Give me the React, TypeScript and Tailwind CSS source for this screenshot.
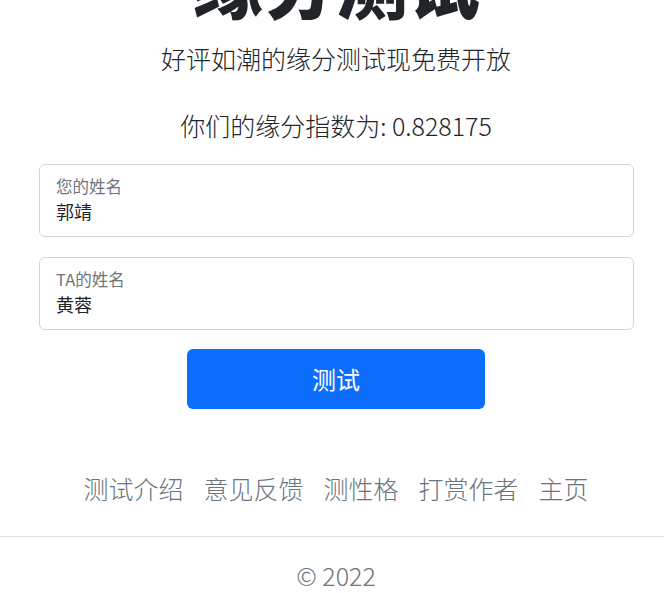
import React from "react";

const cjk = { fontFamily: '"Noto Sans CJK SC", "Noto Sans", sans-serif' };

function Field({ label, value }: { label: string; value: string }) {
  return (
    <div className="h-[73px] border border-[#ced4da] rounded-[6px] bg-white pl-[16px] pt-[11px]">
      <div className="text-[16.5px] leading-[20px] text-[#6c757d]">{label}</div>
      <div className="mt-[4px] text-[18px] leading-[22px] text-[#212529]">{value}</div>
    </div>
  );
}

export default function App() {
  const links = ["测试介绍", "意见反馈", "测性格", "打赏作者", "主页"];

  return (
    <div className="w-full overflow-hidden bg-white" style={cjk}>
      <div className="w-[672px] flex flex-col">
        {/* Title (scrolled partly out of view) */}
        <h1 className="mt-[-54px] h-[72px] text-center text-[72px] leading-[72px] font-black text-[#212529]">
          缘分测试
        </h1>

        <p className="mt-[22px] text-center text-[25px] leading-[36px] font-light text-[#212529]">
          好评如潮的缘分测试现免费开放
        </p>

        <p className="mt-[31px] text-center text-[25px] leading-[36px] font-light text-[#212529]">
          你们的缘分指数为: 0.828175
        </p>

        {/* Form */}
        <div className="mt-[21px] ml-[39px] mr-[38px] flex flex-col gap-[20px]">
          <Field label="您的姓名" value="郭靖" />
          <Field label="TA的姓名" value="黄蓉" />
        </div>

        <div className="mt-[19px] flex justify-center">
          <button className="w-[298px] h-[60px] rounded-[6px] bg-[#0d6efd] text-white text-[24px] leading-[32px]">
            测试
          </button>
        </div>

        {/* Links */}
        <nav className="mt-[61px] flex justify-center gap-[20px] text-[25px] leading-[36px] font-light text-[#6c757d]">
          {links.map((l) => (
            <a key={l} href="#">
              {l}
            </a>
          ))}
        </nav>

        <hr className="mt-[30px] border-t border-[#dee2e6]" />

        <footer className="mt-[20px] text-center text-[25px] leading-[36px] font-light text-[#6c757d]">
          © 2022
        </footer>
      </div>
    </div>
  );
}
